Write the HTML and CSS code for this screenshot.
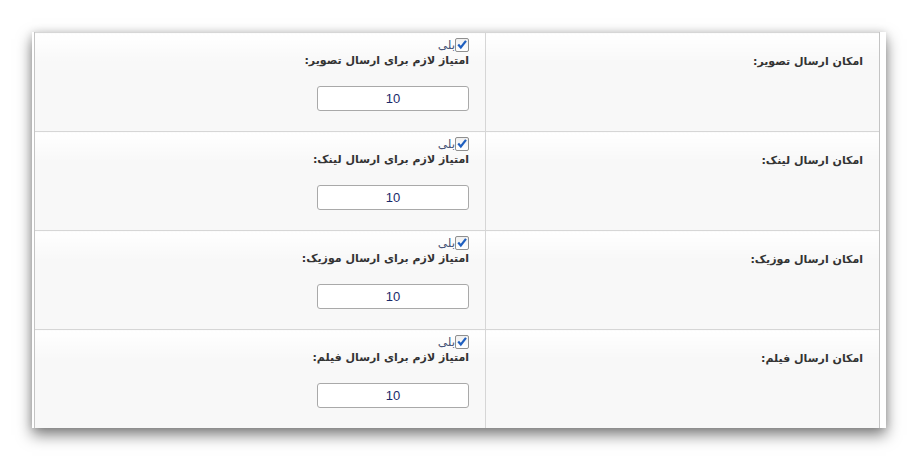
FILE: index.html
```html
<!DOCTYPE html>
<html lang="fa" dir="rtl">
<head>
    <meta charset="UTF-8">
    <title>تنظیمات ارسال</title>
    <link rel="stylesheet" href="styles.css">
</head>
<body>
    <div class="window">
        <div class="frame">
            <table class="settings">
                <tr>
                    <td class="name">امکان ارسال تصویر:</td>
                    <td class="value">
                        <label class="check"><span class="box"><svg viewBox="0 0 13 13" width="13" height="13"><path d="M2.4 6.6 L5.2 9.8 L10.8 2.6" fill="none" stroke="#1f5fbf" stroke-width="2.4"/></svg></span>بلی</label>
                        <div class="caption">امتیاز لازم برای ارسال تصویر:</div>
                        <input type="text" class="points" value="10">
                    </td>
                </tr>
                <tr>
                    <td class="name">امکان ارسال لینک:</td>
                    <td class="value">
                        <label class="check"><span class="box"><svg viewBox="0 0 13 13" width="13" height="13"><path d="M2.4 6.6 L5.2 9.8 L10.8 2.6" fill="none" stroke="#1f5fbf" stroke-width="2.4"/></svg></span>بلی</label>
                        <div class="caption">امتیاز لازم برای ارسال لینک:</div>
                        <input type="text" class="points" value="10">
                    </td>
                </tr>
                <tr>
                    <td class="name">امکان ارسال موزیک:</td>
                    <td class="value">
                        <label class="check"><span class="box"><svg viewBox="0 0 13 13" width="13" height="13"><path d="M2.4 6.6 L5.2 9.8 L10.8 2.6" fill="none" stroke="#1f5fbf" stroke-width="2.4"/></svg></span>بلی</label>
                        <div class="caption">امتیاز لازم برای ارسال موزیک:</div>
                        <input type="text" class="points" value="10">
                    </td>
                </tr>
                <tr>
                    <td class="name">امکان ارسال فیلم:</td>
                    <td class="value">
                        <label class="check"><span class="box"><svg viewBox="0 0 13 13" width="13" height="13"><path d="M2.4 6.6 L5.2 9.8 L10.8 2.6" fill="none" stroke="#1f5fbf" stroke-width="2.4"/></svg></span>بلی</label>
                        <div class="caption">امتیاز لازم برای ارسال فیلم:</div>
                        <input type="text" class="points" value="10">
                    </td>
                </tr>
            </table>
        </div>
    </div>
</body>
</html>
```

FILE: styles.css
```css
html, body {
    margin: 0;
    padding: 0;
    background: #ffffff;
}
body {
    padding: 32px;
    font-family: "DejaVu Sans", sans-serif;
}
.window {
    height: 396px;
    background: #ffffff;
    padding: 0 6px 0 2px;
    box-shadow: 0 7px 14px rgba(0, 0, 0, 0.5), 0 0 8px rgba(0, 0, 0, 0.12);
    overflow: hidden;
}
.frame {
    height: 100%;
    border-left: 1px solid #c4c4c4;
    border-right: 1px solid #c4c4c4;
    overflow: hidden;
}
.settings {
    width: 100%;
    border-collapse: collapse;
    direction: rtl;
}
.settings tr {
    height: 99px;
}
.settings td {
    padding: 0;
    border-top: 1px solid #d6d6d6;
    background: linear-gradient(#ffffff, #f8f8f8 28px);
    vertical-align: top;
}
.name {
    width: 377px;
    padding: 22px 16px 0 0 !important;
    font-size: 11px;
    font-weight: bold;
    color: #333;
    border-left: 1px solid #d6d6d6;
}
.value {
    padding: 4px 16px 0 0 !important;
}
.check {
    display: flex;
    align-items: center;
    font-size: 12px;
    color: #4a5578;
    height: 15px;
}
.box {
    display: inline-flex;
    width: 12px;
    height: 12px;
    border: 1px solid #8f8f8f;
    border-radius: 2px;
    background: linear-gradient(#f0f0f0, #ffffff);
    align-items: center;
    justify-content: center;
}
.caption {
    margin-top: 2px;
    font-size: 11px;
    font-weight: bold;
    color: #333;
}
.points {
    display: block;
    margin-top: 19px;
    width: 152px;
    height: 25px;
    box-sizing: border-box;
    border: 1px solid #a9a9a9;
    border-radius: 3px;
    background: #ffffff;
    text-align: center;
    font-family: "Liberation Sans", sans-serif;
    font-size: 13px;
    color: #1a2a6a;
    padding: 0;
}
```
